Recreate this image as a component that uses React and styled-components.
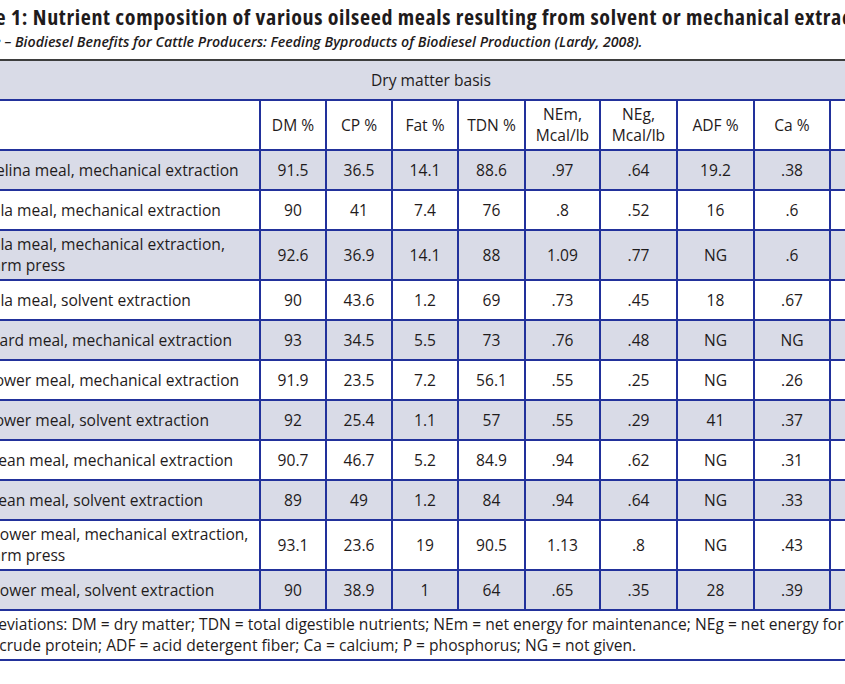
import React from "react";
import styled, { createGlobalStyle } from "styled-components";

const BLUE = "#22319b";
const SHADE = "#d9dbe7";
const INK = "#1f1b1c";

const GlobalStyle = createGlobalStyle`
  html, body { margin: 0; padding: 0; background: #fff; overflow: hidden; }
  body { font-family: "Open Sans", "Noto Sans", sans-serif; color: ${INK}; }
`;

const Page = styled.div`
  margin-left: -43px;
  width: 1000px;
`;

const Title = styled.h1`
  margin: 0;
  padding-top: 2px;
  height: 30px;
  font-size: 22px;
  line-height: 29px;
  font-weight: 700;
  font-stretch: 87.5%;
  letter-spacing: 0.65px;
  white-space: nowrap;
`;

const Source = styled.p`
  margin: 0;
  font-size: 14.2px;
  line-height: 20px;
  font-style: italic;
  font-weight: 600;
  white-space: nowrap;
`;

const Table = styled.div`
  margin-top: 7px;
  width: 948px;
  border-top: 2px solid #3d3d3d;
  font-size: 15.6px;
`;

const Band = styled.div`
  box-sizing: border-box;
  height: 40px;
  background: ${SHADE};
  border-bottom: 2px solid ${BLUE};
  display: flex;
  align-items: center;
  justify-content: center;
`;

const Row = styled.div`
  box-sizing: border-box;
  display: grid;
  grid-template-columns: 302px 66px 66px 66px 67px 75px 77px 77px 76px 76px;
  height: ${(p) => p.$h}px;
  background: ${(p) => (p.$shaded ? SHADE : "#fff")};
  border-bottom: 2px solid ${BLUE};
`;

const Cell = styled.div`
  box-sizing: border-box;
  border-left: 2px solid ${BLUE};
  display: flex;
  align-items: center;
  justify-content: center;
  text-align: center;
  line-height: 21px;
  white-space: pre-line;
`;

const LabelCell = styled.div`
  box-sizing: border-box;
  padding-left: 6px;
  display: flex;
  align-items: center;
  line-height: 21px;
  white-space: pre-line;
`;

const Note = styled.div`
  box-sizing: border-box;
  height: 50px;
  padding: 3px 6px 0;
  font-size: 15.6px;
  line-height: 21px;
  white-space: nowrap;
  border-bottom: 2px solid ${BLUE};
`;

const headers = ["DM %", "CP %", "Fat %", "TDN %", "NEm,\nMcal/lb", "NEg,\nMcal/lb", "ADF %", "Ca %", "P %"];

const rows = [
  ["Camelina meal, mechanical extraction", "91.5", "36.5", "14.1", "88.6", ".97", ".64", "19.2", ".38"],
  ["Canola meal, mechanical extraction", "90", "41", "7.4", "76", ".8", ".52", "16", ".6"],
  ["Canola meal, mechanical extraction,\non-farm press", "92.6", "36.9", "14.1", "88", "1.09", ".77", "NG", ".6"],
  ["Canola meal, solvent extraction", "90", "43.6", "1.2", "69", ".73", ".45", "18", ".67"],
  ["Mustard meal, mechanical extraction", "93", "34.5", "5.5", "73", ".76", ".48", "NG", "NG"],
  ["Safflower meal, mechanical extraction", "91.9", "23.5", "7.2", "56.1", ".55", ".25", "NG", ".26"],
  ["Safflower meal, solvent extraction", "92", "25.4", "1.1", "57", ".55", ".29", "41", ".37"],
  ["Soybean meal, mechanical extraction", "90.7", "46.7", "5.2", "84.9", ".94", ".62", "NG", ".31"],
  ["Soybean meal, solvent extraction", "89", "49", "1.2", "84", ".94", ".64", "NG", ".33"],
  ["Sunflower meal, mechanical extraction,\non-farm press", "93.1", "23.6", "19", "90.5", "1.13", ".8", "NG", ".43"],
  ["Sunflower meal, solvent extraction", "90", "38.9", "1", "64", ".65", ".35", "28", ".39"],
];

export default function App() {
  return (
    <Page>
      <GlobalStyle />
      <Title>Table 1: Nutrient composition of various oilseed meals resulting from solvent or mechanical extraction.</Title>
      <Source>Source – Biodiesel Benefits for Cattle Producers: Feeding Byproducts of Biodiesel Production (Lardy, 2008).</Source>
      <Table>
        <Band>Dry matter basis</Band>
        <Row $h={50}>
          <LabelCell />
          {headers.map((h) => (
            <Cell key={h}>{h}</Cell>
          ))}
        </Row>
        {rows.map((r, i) => (
          <Row key={r[0]} $h={r[0].includes("\n") ? 50 : 40} $shaded={i % 2 === 0}>
            <LabelCell>{r[0]}</LabelCell>
            {r.slice(1).map((v, j) => (
              <Cell key={j}>{v}</Cell>
            ))}
            <Cell />
          </Row>
        ))}
        <Note>
          Abbreviations: DM = dry matter; TDN = total digestible nutrients; NEm = net energy for maintenance; NEg = net energy for gain;
          <br />
          CP = crude protein; ADF = acid detergent fiber; Ca = calcium; P = phosphorus; NG = not given.
        </Note>
      </Table>
    </Page>
  );
}
